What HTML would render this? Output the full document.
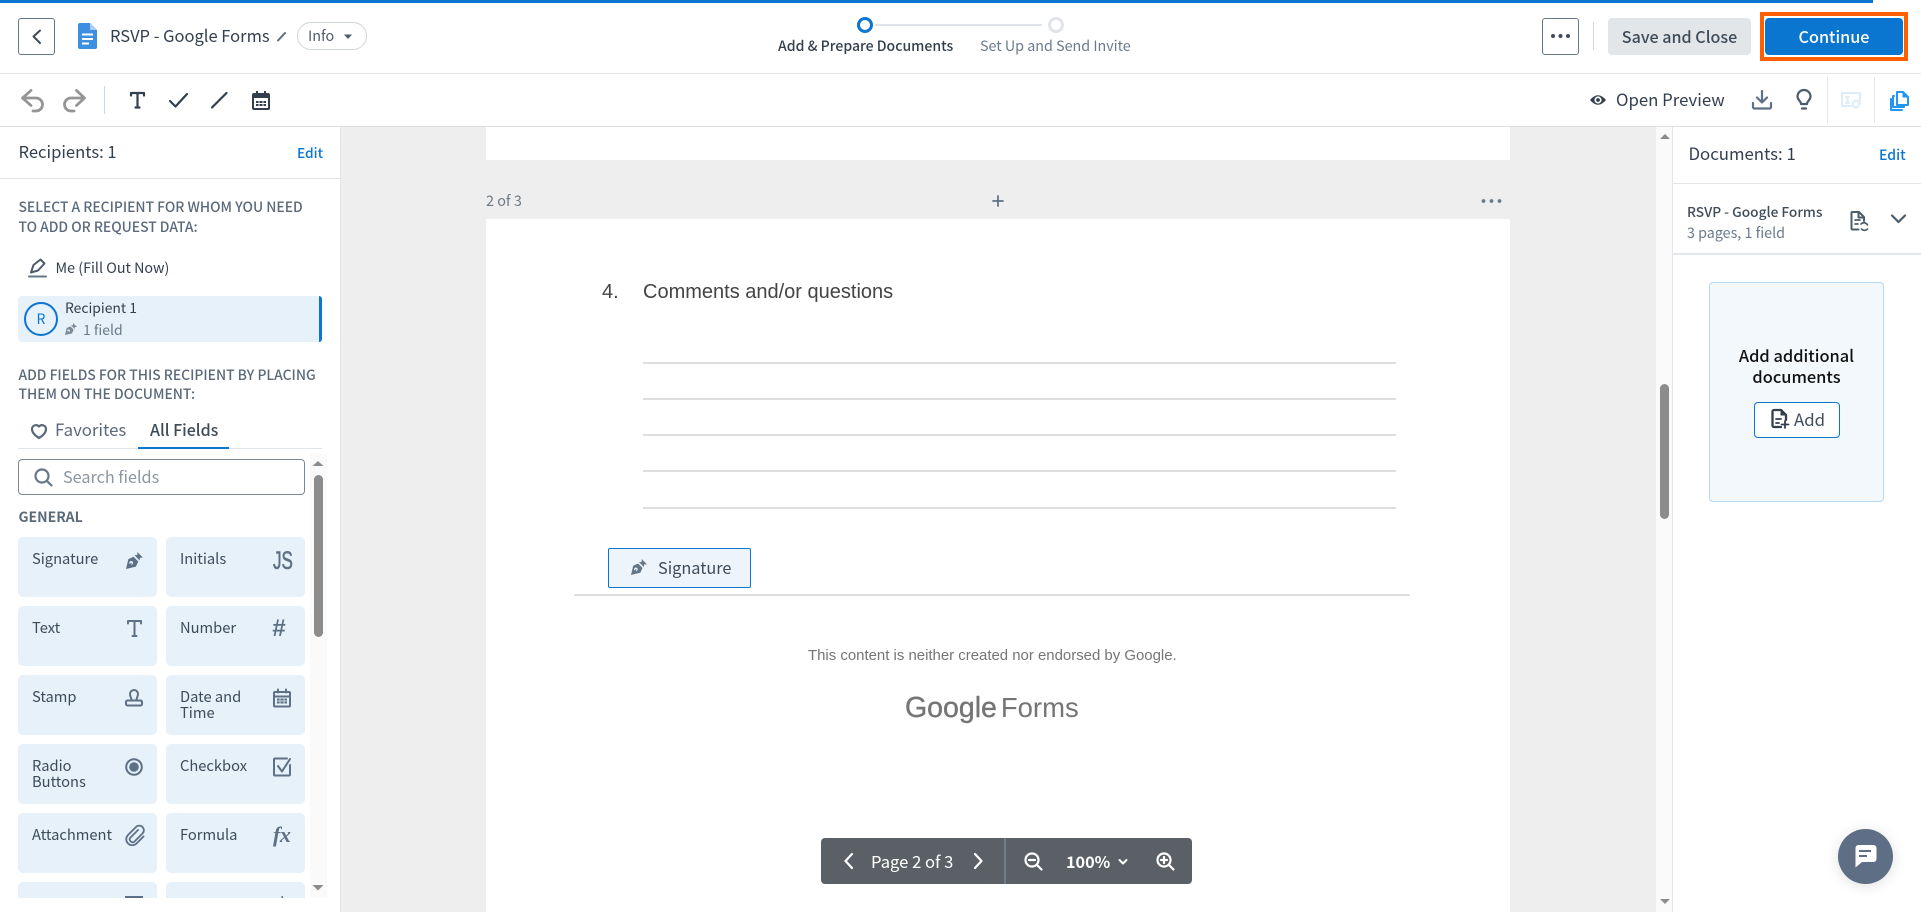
<!DOCTYPE html>
<html><head><meta charset="utf-8"><title>RSVP - Google Forms</title>
<style>
html,body{margin:0;padding:0;background:#fff}
#r{position:relative;width:1921px;height:912px;overflow:hidden;background:#fff;font-family:"Noto Sans CJK JP","Liberation Sans",sans-serif;color:#333f4e}
#r div{position:absolute}
.t{white-space:nowrap;line-height:20px;height:20px}
.c{font-size:14.7px;line-height:16px;white-space:nowrap;color:#3e4c5a}
.card{width:139px;height:60px;background:#e6f1fa;border-radius:5px}
.cap{font-size:13.85px;font-weight:500;color:#5a6a7a;white-space:nowrap;line-height:20px}
svg{position:absolute;left:0;top:0}
</style></head><body><div id="r">
<!-- backgrounds -->
<div style="left:341px;top:127px;width:1315px;height:785px;background:#eee"></div>
<div style="left:486px;top:127px;width:1024px;height:33px;background:#fff"></div>
<div style="left:486px;top:219px;width:1024px;height:693px;background:#fff"></div>
<div style="left:1656px;top:127px;width:16px;height:785px;background:#fafafa"></div>
<div style="left:1660px;top:384px;width:9px;height:135px;background:#8c8c8c;border-radius:5px"></div>
<div style="left:1672px;top:127px;width:1px;height:785px;background:#e3e6ea"></div>
<div style="left:340px;top:127px;width:1px;height:785px;background:#e3e5e8"></div>
<div style="left:0;top:0;width:1873px;height:3px;background:#0b76d0"></div>
<div style="left:0;top:73px;width:1921px;height:1px;background:#e3e5e8"></div>
<div style="left:0;top:126px;width:1921px;height:1px;background:#dcdfe2"></div>
<div style="left:0;top:178px;width:340px;height:1px;background:#e3e5e8"></div>
<div style="left:1673px;top:183px;width:248px;height:1px;background:#e3e5e8"></div>
<div style="left:1673px;top:253px;width:248px;height:2px;background:#e3e6ea"></div>

<!-- header -->
<div style="left:18px;top:18px;width:35px;height:35px;border:1px solid #66778a;border-radius:3px"></div>
<div class="t" style="left:110px;top:25px;font-size:16.5px;color:#333f4e">RSVP - Google Forms</div>
<div style="left:297px;top:22px;width:68px;height:26px;border:1px solid #ced4da;border-radius:14px"></div>
<div class="t" style="left:308px;top:26px;font-size:14.4px;color:#4d5c6b">Info</div>
<div class="t" style="left:778px;top:36px;font-size:14.05px;font-weight:500;color:#333f4e">Add &amp; Prepare Documents</div>
<div class="t" style="left:980px;top:36px;font-size:14.3px;color:#6a7a8a">Set Up and Send Invite</div>
<div style="left:875px;top:24px;width:167px;height:2px;background:#dfe3e7"></div>
<div style="left:857px;top:17px;width:10px;height:10px;border:3px solid #0b76d0;border-radius:50%"></div>
<div style="left:1048px;top:17px;width:10px;height:10px;border:3px solid #e1e4e8;border-radius:50%"></div>
<div style="left:1542px;top:18px;width:35px;height:35px;border:1px solid #66778a;border-radius:3px"></div>
<div style="left:1593px;top:22px;width:1px;height:28px;background:#ccd6e0"></div>
<div style="left:1608px;top:18px;width:143px;height:37px;background:#e3e6e9;border-radius:4px"></div>
<div class="t" style="left:1608px;width:143px;text-align:center;top:26px;font-size:16.1px;font-weight:500;color:#3e4c5a">Save and Close</div>
<div style="left:1760px;top:12px;width:140px;height:41px;border:4px solid #ff5f00;background:#fff"></div>
<div style="left:1765px;top:18px;width:138px;height:37px;background:#0b76d0;border-radius:4px"></div>
<div class="t" style="left:1765px;width:138px;text-align:center;top:26px;font-size:16.2px;font-weight:500;color:#fff">Continue</div>

<!-- toolbar -->
<div style="left:104px;top:86px;width:1px;height:28px;background:#ccd8e6"></div>
<div style="left:1827px;top:77px;width:1px;height:46px;background:#e6e8ea"></div>
<div style="left:1874px;top:77px;width:1px;height:46px;background:#e6e8ea"></div>
<div class="t" style="left:1616px;top:89px;font-size:16.8px;color:#333f4e">Open Preview</div>

<!-- left panel -->
<div class="t" style="left:18.500px;top:141px;font-size:16.6px;color:#333f4e">Recipients: 1</div>
<div class="t" style="left:297px;top:142px;font-size:13.7px;font-weight:500;color:#0b76d0">Edit</div>
<div class="cap" style="left:18.500px;top:196px">SELECT A RECIPIENT FOR WHOM YOU NEED</div>
<div class="cap" style="left:18.500px;top:216px">TO ADD OR REQUEST DATA:</div>
<div class="t" style="left:55.500px;top:258px;font-size:14.3px;color:#333f4e">Me (Fill Out Now)</div>
<div style="left:18px;top:296px;width:304px;height:46px;background:#e6f1fa;border-radius:4px"></div>
<div style="left:319px;top:296px;width:3px;height:46px;background:#0b76d0;border-radius:0 3px 3px 0"></div>
<div style="left:24px;top:302px;width:30px;height:30px;border:2px solid #0b76d0;border-radius:50%;text-align:center;line-height:30px;font-size:14px;color:#0b76d0">R</div>
<div class="t" style="left:65px;top:298px;font-size:13.9px;color:#333f4e">Recipient 1</div>
<div class="t" style="left:83px;top:320px;font-size:14px;color:#6b7a88">1 field</div>
<div class="cap" style="left:18.500px;top:364px">ADD FIELDS FOR THIS RECIPIENT BY PLACING</div>
<div class="cap" style="left:18.500px;top:383px">THEM ON THE DOCUMENT:</div>
<div class="t" style="left:55px;top:419px;font-size:16.8px;color:#5a6a7a">Favorites</div>
<div class="t" style="left:150px;top:419px;font-size:16px;font-weight:500;color:#3e4c5a">All Fields</div>
<div style="left:18px;top:448px;width:304px;height:1px;background:#dfe4e9"></div>
<div style="left:138px;top:447px;width:91px;height:2px;background:#0b76d0"></div>
<div style="left:18px;top:459px;width:285px;height:34px;border:1px solid #7b8794;border-radius:4px"></div>
<div class="t" style="left:63px;top:466px;font-size:16.2px;color:#8a96a2">Search fields</div>
<div class="t" style="left:18.500px;top:507px;font-size:14px;font-weight:700;color:#5a6a7a">GENERAL</div>
<div style="left:310px;top:454px;width:17px;height:444px;background:#fafafa"></div>
<div style="left:314px;top:475px;width:9px;height:162px;background:#8c8c8c;border-radius:5px"></div>

<div style="left:0;top:530px;width:310px;height:368px;overflow:hidden">
<div class="card" style="left:18px;top:7px"></div><div class="card" style="left:166px;top:7px"></div>
<div class="card" style="left:18px;top:76px"></div><div class="card" style="left:166px;top:76px"></div>
<div class="card" style="left:18px;top:145px"></div><div class="card" style="left:166px;top:145px"></div>
<div class="card" style="left:18px;top:214px"></div><div class="card" style="left:166px;top:214px"></div>
<div class="card" style="left:18px;top:283px"></div><div class="card" style="left:166px;top:283px"></div>
<div class="card" style="left:18px;top:352px"></div><div class="card" style="left:166px;top:352px"></div>
<div class="c" style="left:32px;top:20.500px">Signature</div><div class="c" style="left:180px;top:20.500px">Initials</div>
<div class="c" style="left:32px;top:89.500px">Text</div><div class="c" style="left:180px;top:89.500px">Number</div>
<div class="c" style="left:32px;top:158.500px">Stamp</div><div class="c" style="left:180px;top:158.500px">Date and<br>Time</div>
<div class="c" style="left:32px;top:227.500px">Radio<br>Buttons</div><div class="c" style="left:180px;top:227.500px">Checkbox</div>
<div class="c" style="left:32px;top:296.500px">Attachment</div><div class="c" style="left:180px;top:296.500px">Formula</div>
<div style="left:273px;top:17px;font:400 25px/28px 'Liberation Sans',sans-serif;-webkit-text-stroke:.6px #5e7086;color:#5e7086;transform:scaleX(.68);transform-origin:0 0;white-space:nowrap">JS</div>
<div style="left:272px;top:85px;font:italic 700 24px/28px 'Liberation Sans',sans-serif;color:#5e7086">#</div>
<div style="left:273px;top:292px;font:italic 700 22px/26px 'Liberation Serif',serif;color:#5e7086;letter-spacing:-.5px">fx</div>
</div>

<!-- document -->
<div class="t" style="left:486px;top:191px;font-size:14.4px;color:#6f7b87">2 of 3</div>
<div class="t" style="left:602px;top:281px;height:22px;font:20px/22px 'Liberation Sans',sans-serif;color:#444">4.</div>
<div class="t" style="left:643px;top:281px;height:22px;font:20px/22px 'Liberation Sans',sans-serif;color:#444">Comments and/or questions</div>
<div style="left:643px;top:362px;width:753px;height:2px;background:#dedede"></div>
<div style="left:643px;top:398px;width:753px;height:2px;background:#dedede"></div>
<div style="left:643px;top:434px;width:753px;height:2px;background:#dedede"></div>
<div style="left:643px;top:470px;width:753px;height:2px;background:#dedede"></div>
<div style="left:643px;top:507px;width:753px;height:2px;background:#dedede"></div>
<div style="left:574px;top:594px;width:836px;height:2px;background:#dedede"></div>
<div style="left:608px;top:548px;width:141px;height:38px;background:#edf4fb;border:1px solid #0b76d0;border-radius:2px"></div>
<div class="t" style="left:658px;top:557px;font-size:16.3px;color:#3e4c5a">Signature</div>
<div class="t" style="left:808px;top:646px;font:14.95px/20px 'Liberation Sans',sans-serif;color:#757575">This content is neither created nor endorsed by Google.</div>
<div class="t" style="left:905px;top:690px;height:36px;font:28.5px/36px 'Liberation Sans',sans-serif;color:#757575"><span style="-webkit-text-stroke:.4px #757575">Google</span> <span style="font-size:27.5px;margin-left:-4px">Forms</span></div>

<!-- page toolbar -->
<div style="left:821px;top:838px;width:371px;height:46px;background:#5b6066;border-radius:4px"></div>
<div style="left:1004px;top:838px;width:2px;height:46px;background:#6d7c8a"></div>
<div class="t" style="left:871px;top:851px;font-size:16.6px;color:#fff">Page 2 of 3</div>
<div class="t" style="left:1066px;top:851px;font-size:16.2px;font-weight:700;color:#fff">100%</div>

<!-- right panel -->
<div class="t" style="left:1688.500px;top:143px;font-size:16.8px;color:#333f4e">Documents: 1</div>
<div class="t" style="left:1879px;top:145px;font-size:14px;font-weight:500;color:#0b76d0">Edit</div>
<div class="t" style="left:1687px;top:201px;font-size:13.7px;font-weight:500;color:#3e4c5a">RSVP - Google Forms</div>
<div class="t" style="left:1687px;top:223px;font-size:14.3px;color:#6a7a8a">3 pages, 1 field</div>
<div style="left:1709px;top:282px;width:173px;height:218px;background:#f3f8fd;border:1px solid #b9d9f2;border-radius:4px"></div>
<div style="left:1709px;top:345px;width:175px;text-align:center;font-size:16.4px;font-weight:500;line-height:21px;color:#111">Add additional<br>documents</div>
<div style="left:1754px;top:402px;width:84px;height:34px;background:#fff;border:1px solid #0b76d0;border-radius:4px"></div>
<div class="t" style="left:1794px;top:409px;font-size:16.8px;color:#3e4c5a">Add</div>
<div style="left:1838px;top:829px;width:55px;height:55px;border-radius:50%;background:#5e6e85;box-shadow:0 2px 14px rgba(0,0,0,.12)"></div>

<!-- icons -->
<svg width="1921" height="912" viewBox="0 0 1921 912" fill="none" stroke-linecap="round" stroke-linejoin="round">
<defs>
<symbol id="pen" viewBox="0 0 18 18" overflow="visible">
<path fill-rule="evenodd" d="M0 18 2.500 7.500 8 5 13 10 10.500 15.500ZM5.500 9.500a2 2 0 1 0 .01 0Z" fill="currentColor"/>
<path d="M9 3.500 12 3.200 12 0 18 6 14.800 6 14.500 9Z" fill="currentColor"/>
<path d="M1 17 5.500 12" stroke="currentColor" stroke-width="1.200"/>
</symbol>
</defs>
<!-- back / doc / pencil / caret -->
<path d="M40 30.500 33.500 36.500 40 43" stroke="#3e4c5a" stroke-width="2"/>
<path d="M80 23h10l7 7v17a2 2 0 0 1-2 2H80a2 2 0 0 1-2-2V25a2 2 0 0 1 2-2Z" fill="#3f8fe0"/>
<path d="M90 23v7h7Z" fill="#a9cdf2"/>
<path d="M82 34.500h11M82 39h11M82 43.500h7" stroke="#fff" stroke-width="2" stroke-linecap="butt"/>
<path d="M278 40.500 285 33" stroke="#5e6b78" stroke-width="2"/>
<path d="M344 34.500h8L348 39Z" fill="#4d5c6b"/>
<circle cx="1553" cy="36" r="2" fill="#3e4c5a"/><circle cx="1560.500" cy="36" r="2" fill="#3e4c5a"/><circle cx="1568" cy="36" r="2" fill="#3e4c5a"/>
<!-- undo redo -->
<path d="M31 90.500 22.500 98 31 105.500M22.500 98H36a6.500 6.500 0 0 1 0 13H33" stroke="#959595" stroke-width="2.800"/>
<path d="M76.500 90.500 84.500 98 76.500 105.500M84.500 98H71a6.500 6.500 0 0 0 0 13h3" stroke="#959595" stroke-width="2.800"/>
<!-- T check line calendar -->
<path d="M131 95.500v-2.500h13v2.500M137.500 93v14.500M135.500 107.500h4" stroke="#333f4e" stroke-width="2.200"/>
<path d="M170 101l5.500 5.500L187 94" stroke="#333f4e" stroke-width="2.200"/>
<path d="M212 107.500 226.500 93" stroke="#333f4e" stroke-width="2.200"/>
<g stroke="#333f4e" stroke-width="2"><rect x="253" y="94" width="16" height="15" rx="1"/><path d="M257 91v4M265 91v4" stroke-linecap="butt"/></g>
<path d="M253 94h16v4h-16Z" fill="#333f4e"/>
<path d="M256 101h10v5h-10Z" fill="#333f4e"/><path d="M259 101v5M263 101v5M256 103.500h10" stroke="#fff" stroke-width=".9" stroke-linecap="butt"/>
<!-- toolbar right -->
<path d="M1590 100q8-9.500 16 0q-8 9.500-16 0Z" fill="#333f4e"/><circle cx="1598" cy="100" r="3.600" fill="#fff"/><circle cx="1598" cy="100" r="1.900" fill="#333f4e"/>
<path d="M1762 91v11M1757 97.500l5 5 5-5M1753 103v4a1.500 1.500 0 0 0 1.500 1.500h15a1.500 1.500 0 0 0 1.500-1.500v-4" stroke="#5e7086" stroke-width="2.200"/>
<path d="M1801 104c0-3-3.500-4-3.500-7.500a6.500 6.500 0 0 1 13 0c0 3.500-3.500 4.500-3.500 7.500ZM1802 108.500h4" stroke="#4d5c6b" stroke-width="2.200"/>
<path d="M1842 93h18v8M1842 93v13h9M1846 97h3M1847.500 97v6M1846 103h3" stroke="#dcecf9" stroke-width="2"/><circle cx="1856" cy="104" r="3.500" stroke="#dcecf9" stroke-width="2"/>
<path d="M1897 92h6l5 5v8h-11Z" stroke="#2196f3" stroke-width="2"/><path d="M1903 92v5h5Z" fill="#2196f3" stroke="#2196f3"/>
<path d="M1894 96h-1v11h11v-1M1891 99v11h11" stroke="#2196f3" stroke-width="2"/>
<!-- left -->
<path d="M29 276.500h17" stroke="#66778a" stroke-width="2"/>
<path d="M31 272.500 33.500 265 40.500 259.500l4 4-6.500 7Z" stroke="#4d5c6b" stroke-width="2"/>
<use href="#pen" x="65" y="323" width="12" height="12" style="color:#7b8a98"/>
<path d="M39 438c-5-3-7-6-7-9a4 4 0 0 1 7-2.500 4 4 0 0 1 7 2.500c0 3-2 6-7 9Z" stroke="#5a6a7a" stroke-width="2.200"/>
<circle cx="42" cy="476" r="6.500" stroke="#66778a" stroke-width="2.200"/><path d="M47 481l4.500 4.500" stroke="#66778a" stroke-width="2.200"/>
<path d="M318 461l5.500 5H312.500Z" fill="#8c8c8c"/>
<path d="M312.500 885h11L318 890.500Z" fill="#8c8c8c"/>
<!-- field icons -->
<use href="#pen" x="126" y="552" width="17" height="17" style="color:#5e7086"/>
<g stroke="#5e7086" stroke-width="2">
<path d="M128 623.500v-2.500h13v2.500M134.500 621v15M132.500 636h4"/>
<path d="M131.500 699.500c-.5-2-1.500-3.500-1.500-5.500a4 4 0 0 1 8 0c0 2-1 3.500-1.500 5.500"/>
<rect x="126" y="700.500" width="16" height="5" rx="1.500"/>
<rect x="274" y="692" width="16" height="14.500" rx="1"/><path d="M278 689.500v3M286 689.500v3M274 696.500h16"/>
<circle cx="134" cy="767" r="7.800"/>
<path d="M290 765v9.500a1 1 0 0 1-1 1h-14a1 1 0 0 1-1-1v-15a1 1 0 0 1 1-1h12"/><path d="M278 766l4 5.500 8-12.500"/>
<path d="M138 830l-8 8a3 3 0 0 0 4 4l8.500-8.500a4.500 4.500 0 0 0-6.500-6.500l-8 8a6 6 0 0 0 8.500 8.500l7-7" stroke-width="1.800"/>
</g>
<circle cx="134" cy="767" r="4.800" fill="#5e7086"/>
<path d="M277 698.500h10v5h-10Z" fill="#5e7086"/><path d="M280 698.500v5M284 698.500v5M277 701h10" stroke="#e6f1fa" stroke-width=".8"/>
<path d="M125 896h18v2h-18Z" fill="#5e7086"/><path d="M281.500 896h1.500v2h-1.500Z" fill="#5e7086"/>
<!-- doc area -->
<path d="M998 196v10M993 201h10" stroke="#5e7086" stroke-width="1.700"/>
<circle cx="1483.500" cy="201" r="1.900" fill="#6a7a8a"/><circle cx="1491.500" cy="201" r="1.900" fill="#6a7a8a"/><circle cx="1499.500" cy="201" r="1.900" fill="#6a7a8a"/>
<use href="#pen" x="631" y="559" width="16" height="16" style="color:#66778a"/>
<!-- page tools -->
<path d="M852 854l-6.500 7 6.500 7M975 854l6.500 7-6.500 7" stroke="#fff" stroke-width="2.200"/>
<circle cx="1032" cy="860" r="6.500" stroke="#fff" stroke-width="2.200"/><path d="M1037 865l4.500 4.500M1029 860h6" stroke="#fff" stroke-width="2.200"/>
<circle cx="1164" cy="860" r="6.500" stroke="#fff" stroke-width="2.200"/><path d="M1169 865l4.500 4.500M1161 860h6M1164 857v6" stroke="#fff" stroke-width="2.200"/>
<path d="M1119.500 860l3.500 3.500 3.500-3.500" stroke="#fff" stroke-width="2"/>
<!-- scrollbar arrows -->
<path d="M1665 134l5 5h-10Z" fill="#8c8c8c"/><path d="M1660 899h10l-5 5Z" fill="#8c8c8c"/>
<!-- right doc -->
<path d="M1864 221v-4l-5-5h-6.500a1 1 0 0 0-1 1v15.500a1 1 0 0 0 1 1h6M1858.500 212v5.500h5.500" stroke="#4d5c6b" stroke-width="2"/>
<path d="M1855 220h5M1855 224h3M1861 224a4 4 0 0 1 6.500 1M1867.500 229a4 4 0 0 1-6 0" stroke="#4d5c6b" stroke-width="1.700"/>
<path d="M1892 215.500l6.500 6.500 6.500-6.500" stroke="#4d5c6b" stroke-width="2.200"/>
<path d="M1781 427h-7a1.500 1.500 0 0 1-1.500-1.500v-14a1.500 1.500 0 0 1 1.500-1.500h7l5 5v5" stroke="#333f4e" stroke-width="2.300"/>
<path d="M1781 410v5h5Z" fill="#333f4e" stroke="#333f4e"/>
<path d="M1776 419h5M1776 423h3M1785 421v7M1781.500 424.500h7" stroke="#333f4e" stroke-width="1.800"/>
<!-- chat -->
<path d="M1856 845h18a3 3 0 0 1 3 3v11a3 3 0 0 1-3 3h-11.500l-6.500 5.500V848a3 3 0 0 1 3-3Z" fill="#fff" transform="translate(-.5 0)"/>
<path d="M1859 851h12M1859 856h8" stroke="#5e6e85" stroke-width="2" stroke-linecap="butt"/>
</svg>
</div></body></html>
